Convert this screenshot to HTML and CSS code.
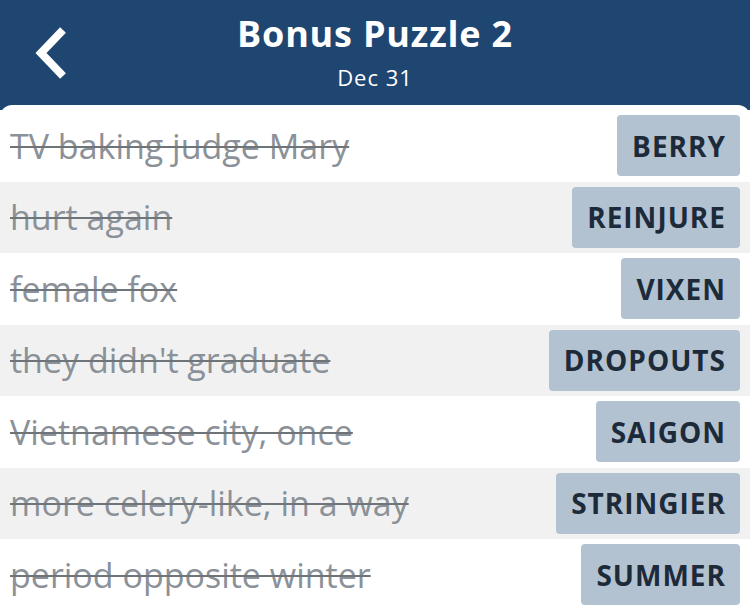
FILE: index.html
```html
<!DOCTYPE html>
<html>
<head>
<meta charset="utf-8">
<link rel="stylesheet" href="styles.css">
</head>
<body>
<div class="app">
  <header class="header">
    <button class="back" aria-label="Back">
      <svg width="40" height="56" viewBox="0 0 40 56"><path d="M31 5 L9 28 L31 51" fill="none" stroke="#fff" stroke-width="8" stroke-linejoin="miter" stroke-linecap="butt"/></svg>
    </button>
    <div class="titles">
      <div class="title">Bonus Puzzle 2</div>
      <div class="subtitle">Dec 31</div>
    </div>
  </header>
  <main class="card">
    <div class="row"><span class="clue">TV baking judge Mary</span><span class="answer">BERRY</span></div>
    <div class="row alt"><span class="clue">hurt again</span><span class="answer">REINJURE</span></div>
    <div class="row"><span class="clue">female fox</span><span class="answer">VIXEN</span></div>
    <div class="row alt"><span class="clue">they didn't graduate</span><span class="answer">DROPOUTS</span></div>
    <div class="row"><span class="clue">Vietnamese city, once</span><span class="answer">SAIGON</span></div>
    <div class="row alt"><span class="clue">more celery-like, in a way</span><span class="answer">STRINGIER</span></div>
    <div class="row"><span class="clue">period opposite winter</span><span class="answer">SUMMER</span></div>
  </main>
</div>
</body>
</html>
```

FILE: styles.css
```css
* { box-sizing: border-box; }
html, body { margin: 0; padding: 0; }
body {
  width: 750px;
  height: 613px;
  overflow: hidden;
  background: #1f4571;
  font-family: "Open Sans", Lato, sans-serif;
}
.app { display: flex; flex-direction: column; height: 613px; }
.header {
  height: 105px;
  flex: none;
  position: relative;
  display: flex;
  justify-content: center;
  background: #1f4571;
  color: #fff;
}
.back {
  position: absolute;
  left: 32px;
  top: 25px;
  padding: 0;
  border: 0;
  background: none;
  display: flex;
}
.titles {
  display: flex;
  flex-direction: column;
  align-items: center;
  padding-top: 12px;
}
.title {
  font-size: 36px;
  font-weight: 700;
  line-height: 44px;
  letter-spacing: 0.8px;
}
.subtitle {
  font-size: 22px;
  line-height: 26px;
  margin-top: 8px;
  letter-spacing: 1px;
}
.card {
  flex: 1;
  background: #fff;
  border-radius: 12px 12px 0 0;
  padding-top: 5px;
  display: flex;
  flex-direction: column;
}
.row {
  height: 71.5px;
  flex: none;
  display: flex;
  align-items: center;
  justify-content: space-between;
  padding: 0 10px;
  background: #fff;
}
.row.alt { background: #f1f1f1; }
.clue {
  font-size: 34px;
  color: #8b9198;
  text-decoration: line-through;
  text-decoration-color: #6f7479;
  text-decoration-thickness: 2px;
}
.answer {
  height: 61px;
  display: flex;
  align-items: center;
  padding: 0 14px 0 15px;
  background: #b2c2d0;
  border-radius: 4px;
  font-size: 28px;
  font-weight: 700;
  letter-spacing: 1px;
  color: #1d2a39;
}
```
